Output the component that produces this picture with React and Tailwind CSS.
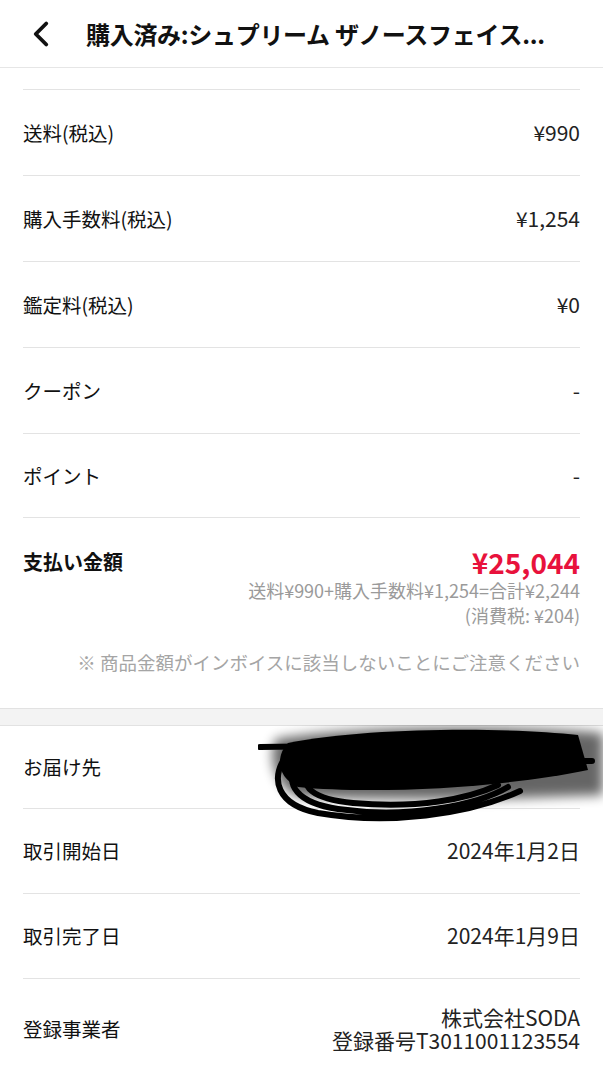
import { ChevronLeft } from 'lucide-react';

const font = { fontFamily: '"Noto Sans CJK JP", "Noto Sans", sans-serif' };

const rows = [
  { label: '送料(税込)', value: '¥990' },
  { label: '購入手数料(税込)', value: '¥1,254' },
  { label: '鑑定料(税込)', value: '¥0' },
  { label: 'クーポン', value: '-' },
  { label: 'ポイント', value: '-' },
];

const Row = ({ label, value, h = 'h-[86px]' }) => (
  <div className={`mx-[23px] ${h} flex items-center justify-between border-b border-[#e3e3e3]`}>
    <span className="text-[19.5px] text-[#111]">{label}</span>
    <span className="text-[21px] text-[#222]">{value}</span>
  </div>
);

// redaction scribble over the address
const Scribble = () => (
  <svg width="345" height="105" viewBox="0 0 345 105" className="absolute right-0 top-[-1px]">
    <defs>
      <filter id="blur" x="-20%" y="-40%" width="140%" height="180%">
        <feGaussianBlur stdDeviation="6" />
      </filter>
    </defs>
    <path d="M18 14 C100 0 260 0 345 8 L345 70 C250 74 150 76 40 72 C15 60 10 30 18 14 Z" fill="#000" filter="url(#blur)" opacity="0.6" />
    <path d="M30 18 C110 2 250 2 320 10 L330 45 C250 62 120 70 40 62 C18 52 18 30 30 18 Z" fill="#000" />
    <path d="M2 22 L300 18 M280 36 L334 36" stroke="#000" strokeWidth="6" fill="none" strokeLinecap="round" />
    <path d="M30 28 C10 55 20 80 60 88 C130 100 210 90 262 66 M40 38 C25 60 40 78 80 84 C150 94 220 80 250 62 M52 44 C40 62 55 74 95 78 C160 84 210 74 240 60" stroke="#000" strokeWidth="6" fill="none" strokeLinecap="round" />
  </svg>
);

export default function App() {
  return (
    <div className="w-[603px] min-h-[1080px] bg-white overflow-hidden" style={font}>
      {/* Header */}
      <div className="h-[68px] flex items-center border-b border-[#e6e6e6]">
        <ChevronLeft className="w-[42px] h-[42px] ml-[20px] text-[#111]" strokeWidth={2.2} />
        <h1 className="ml-[24px] text-[24px] font-bold text-[#111] whitespace-nowrap tracking-[-0.3px]">
          購入済み:シュプリーム ザノースフェイス...
        </h1>
      </div>

      {/* Price breakdown */}
      <div className="pt-[21px]">
        <div className="mx-[23px] border-b border-[#e3e3e3]" />
        {rows.map((r) => (
          <Row key={r.label} {...r} h={r.label === 'ポイント' ? 'h-[84px]' : 'h-[86px]'} />
        ))}
        <div className="mx-[23px] pt-[28px] pb-[33px]">
          <div className="flex justify-between items-start">
            <span className="text-[20px] leading-[32px] font-bold text-[#111]">支払い金額</span>
            <div className="text-right">
              <p className="text-[28px] leading-[32px] font-bold text-[#e8123c]">¥25,044</p>
              <p className="text-[18px] leading-[25px] text-[#9a9a9a]">送料¥990+購入手数料¥1,254=合計¥2,244</p>
              <p className="text-[18px] leading-[25px] text-[#9a9a9a]">(消費税: ¥204)</p>
            </div>
          </div>
          <p className="text-right text-[18.5px] leading-[26px] text-[#a5a5a5] mt-[21px]">※ 商品金額がインボイスに該当しないことにご注意ください</p>
        </div>
      </div>

      <div className="h-[18px] bg-[#f3f3f3] border-y border-[#e2e2e2]" />

      {/* Transaction info */}
      <div>
        <div className="relative">
          <Row label="お届け先" value="" h="h-[83px]" />
          <Scribble />
        </div>
        <Row label="取引開始日" value="2024年1月2日" h="h-[85px]" />
        <Row label="取引完了日" value="2024年1月9日" h="h-[85px]" />
        <div className="mx-[23px] h-[100px] flex items-center justify-between">
          <span className="text-[19.5px] text-[#111]">登録事業者</span>
          <div className="text-right text-[21px] leading-[23px] text-[#222]">
            <p>株式会社SODA</p>
            <p>登録番号T3011001123554</p>
          </div>
        </div>
      </div>
    </div>
  );
}
